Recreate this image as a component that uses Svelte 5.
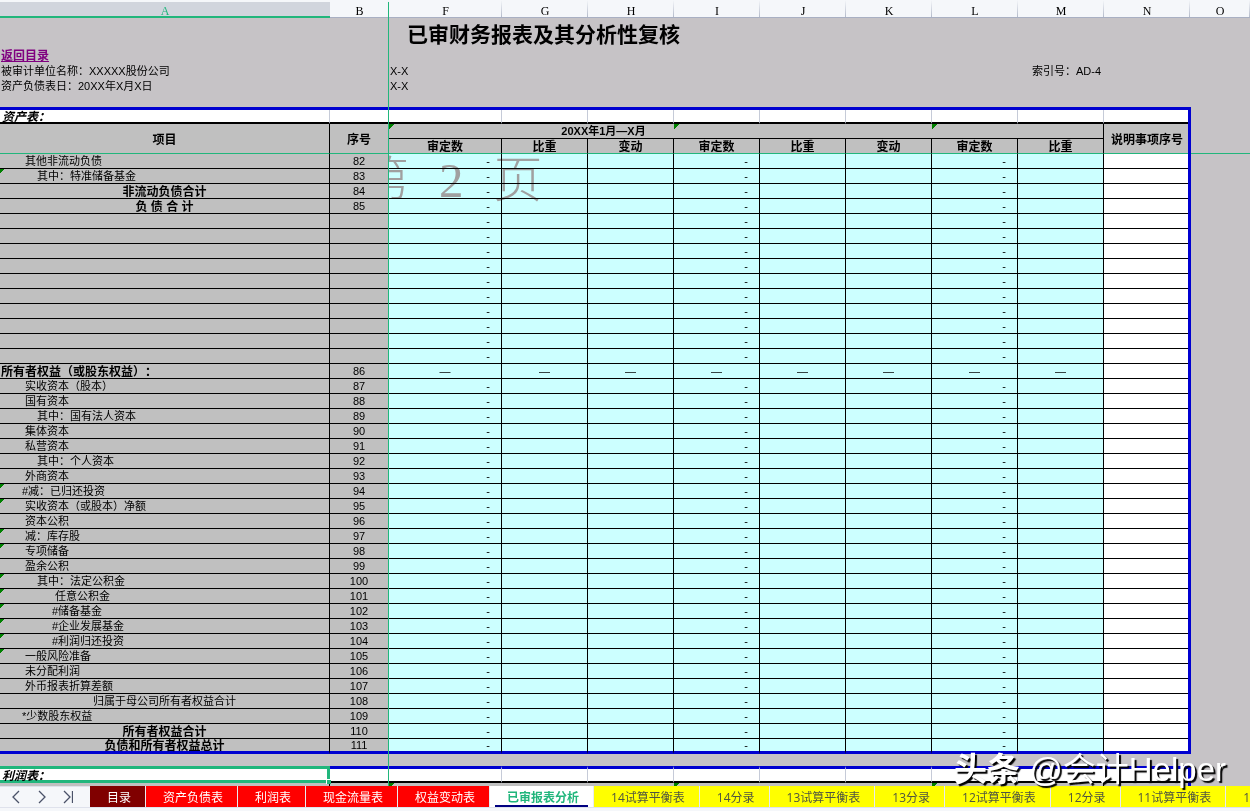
<script>
  const letters = ['A', 'B', 'F', 'G', 'H', 'I', 'J', 'K', 'L', 'M', 'N', 'O'];
  const valueCols = ['F', 'G', 'H', 'I', 'J', 'K', 'L', 'M'];
  const amountCols = ['F', 'I', 'L'];
  const subHeads = ['审定数', '比重', '变动', '审定数', '比重', '变动', '审定数', '比重'];

  const blank = { name: '', no: '' };

  let rows = [
    { name: '其他非流动负债', no: 82, indent: 25 },
    { name: '其中：特准储备基金', no: 83, indent: 37, flag: true },
    { name: '非流动负债合计', no: 84, total: true },
    { name: '负 债 合 计', no: 85, total: true },
    ...Array(10).fill(blank),
    { name: '所有者权益（或股东权益）：', no: 86, indent: 1, bold: true, section: true },
    { name: '实收资本（股本）', no: 87, indent: 25 },
    { name: '国有资本', no: 88, indent: 25 },
    { name: '其中：国有法人资本', no: 89, indent: 37 },
    { name: '集体资本', no: 90, indent: 25 },
    { name: '私营资本', no: 91, indent: 25 },
    { name: '其中：个人资本', no: 92, indent: 37 },
    { name: '外商资本', no: 93, indent: 25 },
    { name: '#减：已归还投资', no: 94, indent: 22, flag: true },
    { name: '实收资本（或股本）净额', no: 95, indent: 25, flag: true },
    { name: '资本公积', no: 96, indent: 25 },
    { name: '减：库存股', no: 97, indent: 25, flag: true },
    { name: '专项储备', no: 98, indent: 25, flag: true },
    { name: '盈余公积', no: 99, indent: 25 },
    { name: '其中：法定公积金', no: 100, indent: 37, flag: true },
    { name: '任意公积金', no: 101, indent: 55, flag: true },
    { name: '#储备基金', no: 102, indent: 52, flag: true },
    { name: '#企业发展基金', no: 103, indent: 52, flag: true },
    { name: '#利润归还投资', no: 104, indent: 52, flag: true },
    { name: '一般风险准备', no: 105, indent: 25, flag: true },
    { name: '未分配利润', no: 106, indent: 25 },
    { name: '外币报表折算差额', no: 107, indent: 25 },
    { name: '归属于母公司所有者权益合计', no: 108, center: true },
    { name: '*少数股东权益', no: 109, indent: 22 },
    { name: '所有者权益合计', no: 110, total: true },
    { name: '负债和所有者权益总计', no: 111, total: true }
  ];

  const tabs = [
    { name: '目录', color: 'maroon' },
    { name: '资产负债表', color: 'red' },
    { name: '利润表', color: 'red' },
    { name: '现金流量表', color: 'red' },
    { name: '权益变动表', color: 'red' },
    { name: '已审报表分析', color: 'navy' },
    { name: '14试算平衡表', color: 'yellow' },
    { name: '14分录', color: 'yellow' },
    { name: '13试算平衡表', color: 'yellow' },
    { name: '13分录', color: 'yellow' },
    { name: '12试算平衡表', color: 'yellow' },
    { name: '12分录', color: 'yellow' },
    { name: '11试算平衡表', color: 'yellow' },
    { name: '11分录', color: 'yellow' }
  ];

  let active = '已审报表分析';

  function cellText(row, col) {
    if (row.section) return '—';
    return amountCols.includes(col) ? '-' : '';
  }
</script>

<div class="app">
  <main class="sheet">
    <table>
      <colgroup>
        <col class="col-a" />
        <col class="col-b" />
        <col class="col-f" />
        {#each Array(8) as _}
          <col class="col-value" />
        {/each}
        <col />
      </colgroup>
      <thead>
        <tr class="letters">
          {#each letters as letter}
            <th scope="col" class:selected={letter === 'A'} class:freeze={letter === 'B'}>{letter}</th>
          {/each}
        </tr>
      </thead>
      <tbody>
        <tr class="title-row">
          <td colspan="2"></td>
          <td colspan="10" class="title">已审财务报表及其分析性复核</td>
        </tr>
        <tr class="info">
          <td colspan="12"><a href="#index">返回目录</a></td>
        </tr>
        <tr class="info">
          <td colspan="2">被审计单位名称：XXXXX股份公司</td>
          <td colspan="7">X-X</td>
          <td colspan="3" class="index-no">索引号：AD-4</td>
        </tr>
        <tr class="info">
          <td colspan="2">资产负债表日：20XX年X月X日</td>
          <td colspan="10">X-X</td>
        </tr>
        <tr class="spacer">
          <td colspan="11" class="blue-line"></td>
          <td></td>
        </tr>
        <tr class="caption">
          <td>资产表：</td>
          {#each letters.slice(1, 11) as letter}
            <td class:edge={letter === 'N'}></td>
          {/each}
          <td class="outside"></td>
        </tr>
        <tr class="head">
          <th rowspan="2" class="frozen-bottom">项目</th>
          <th rowspan="2" class="frozen-bottom">序号</th>
          <th colspan="3" class="group first flag">20XX年1月—X月</th>
          <th colspan="3" class="group flag"></th>
          <th colspan="2" class="group last flag"></th>
          <th rowspan="2" class="frozen-bottom edge">说明事项序号</th>
          <td rowspan="2" class="frozen-bottom outside"></td>
        </tr>
        <tr class="head">
          {#each subHeads as head}
            <th class="frozen-bottom">{head}</th>
          {/each}
        </tr>

        {#each rows as row}
          <tr class="data">
            <td
              class="name"
              class:small-flag={row.flag}
              class:bold={row.total || row.bold}
              class:center={row.total || row.center}
              style="padding-left: {row.indent || 0}px">{row.name}</td>
            <td class="no">{row.no}</td>
            {#each valueCols as col}
              <td class="value" class:center={row.section}>{cellText(row, col)}</td>
            {/each}
            <td class="note edge"></td>
            <td class="outside"></td>
          </tr>
        {/each}

        <tr class="gap">
          <td colspan="12"></td>
        </tr>
        <tr class="caption second">
          <td class="active-cell">利润表：</td>
          {#each letters.slice(1, 11) as letter}
            <td class:edge={letter === 'N'}></td>
          {/each}
          <td class="outside"></td>
        </tr>
        <tr class="head">
          <th></th>
          <th></th>
          <th colspan="3" class="group flag"></th>
          <th colspan="3" class="group flag"></th>
          <th colspan="2" class="group last flag"></th>
          <th class="edge"></th>
          <td class="outside"></td>
        </tr>
      </tbody>
    </table>
    <div class="page-mark"><span>第</span><span>2</span><span>页</span></div>
  </main>

  <footer>
    <div class="arrows">
      <button aria-label="上一个">
        <svg width="8" height="14" viewBox="0 0 8 14"><path d="M7 1 L1 7 L7 13" /></svg>
      </button>
      <button aria-label="下一个">
        <svg width="8" height="14" viewBox="0 0 8 14"><path d="M1 1 L7 7 L1 13" /></svg>
      </button>
      <button aria-label="最后一个">
        <svg width="10" height="14" viewBox="0 0 10 14"><path d="M1 1 L7 7 L1 13 M9.5 1 V13" /></svg>
      </button>
    </div>
    <nav>
      {#each tabs as tab}
        <button class="tab {tab.color}" class:active={tab.name === active} on:click={() => (active = tab.name)}>
          {tab.name}
        </button>
      {/each}
    </nav>
  </footer>

  <div class="brand"><b>头条</b> @会计Helper</div>
</div>

<style>
  :global(body) {
    margin: 0;
    overflow: hidden;
  }

  .app {
    position: relative;
    display: flex;
    flex-direction: column;
    height: 100vh;
    font-family: "Liberation Sans", "Noto Sans CJK SC", sans-serif;
    font-size: 11px;
    text-spacing-trim: space-all;
    color: #000;
    background: #c6c3c6;
  }

  .sheet {
    position: relative;
    flex: 1;
    min-height: 0;
    overflow: hidden;
  }

  table {
    width: 100%;
    min-width: 1200px;
    table-layout: fixed;
    border-collapse: separate;
    border-spacing: 0;
  }

  .col-a { width: 330px; }
  .col-b { width: 59px; }
  .col-f { width: 113px; }
  .col-value { width: 86px; }

  th,
  td {
    box-sizing: border-box;
    padding: 0;
    height: 15px;
    line-height: 14px;
    white-space: nowrap;
  }

  /* column letters */
  .letters th {
    height: 18px;
    padding-top: 6px;
    line-height: 11px;
    font-family: "Liberation Serif", serif;
    font-size: 12px;
    font-weight: normal;
    border-bottom: 1px solid #a9b0c3;
    background: linear-gradient(#f5f7fa, #b4bbca) right / 1px 100% no-repeat #f5f7fa;
  }

  .letters .selected {
    color: #21b67c;
    background: #d1d5dd;
    border-top: 2px solid #f5f7fa;
    border-bottom: 2px solid #21b67c;
    padding-top: 4px;
    line-height: 10px;
  }

  .letters .freeze {
    position: relative;
  }

  .freeze::after {
    content: '';
    position: absolute;
    z-index: 2;
    top: 2px;
    right: 0;
    width: 1px;
    height: 100vh;
    background: #21b67c;
  }

  /* sheet header */
  .title-row td {
    height: 31px;
  }

  .title-row .title {
    padding-top: 3px;
    padding-left: 18px;
    font-size: 21px;
    line-height: 28px;
    font-weight: bold;
  }

  .info td {
    padding-left: 1px;
    line-height: 15px;
  }

  .info .index-no {
    padding-left: 14px;
  }

  .info a {
    color: #800080;
    font-size: 12px;
    font-weight: bold;
  }

  .spacer td {
    height: 16px;
  }

  .spacer .blue-line {
    border-bottom: 3px solid #0000d0;
  }

  .caption td {
    height: 14px;
    padding-top: 3px;
    line-height: 9px;
    font-size: 12px;
    font-weight: bold;
    font-style: italic;
    background: #fff;
    border-right: 1px solid #c6cbd8;
    border-bottom: 2px solid #000;
  }

  .caption td:first-child {
    padding-left: 2px;
  }

  .caption.second td {
    height: 17px;
    border-top: 3px solid #0000d0;
  }

  .caption.second .active-cell {
    position: relative;
    line-height: 8px;
    border-top: 3px solid #21b67c;
    border-right: 3px solid #21b67c;
    border-bottom: 3px solid #21b67c;
  }

  .active-cell::after {
    content: '';
    position: absolute;
    right: -4px;
    bottom: -4px;
    width: 4px;
    height: 4px;
    background: #21b67c;
    border-top: 1px solid #fff;
    border-left: 1px solid #fff;
  }

  .head th {
    padding-top: 2px;
    line-height: 12px;
    font-size: 12px;
    background-color: #c0c0c0;
    border-right: 1px solid #000;
    border-bottom: 1px solid #000;
  }

  .head .group {
    padding-top: 0;
    line-height: 14px;
    font-size: 11px;
    border-right: 0;
  }

  .head .first {
    padding-left: 144px;
  }

  .head .last {
    border-right: 1px solid #000;
  }

  .head .frozen-bottom {
    border-bottom: 1px solid #21b67c;
  }

  .flag {
    background-image: linear-gradient(135deg, #008000 4px, transparent 4px);
  }

  .small-flag {
    background-image: linear-gradient(135deg, #008000 3px, transparent 3px);
  }

  /* data rows */
  .data td {
    border-right: 1px solid #000;
    border-bottom: 1px solid #000;
  }

  .data .name,
  .data .no {
    background-color: #c0c0c0;
  }

  .data .no {
    text-align: center;
  }

  .data .value {
    padding-right: 11px;
    text-align: right;
    background: #cff;
  }

  .data .center {
    padding-right: 0;
    text-align: center;
  }

  .data .note {
    background: #fff;
  }

  .data .bold {
    padding-top: 2px;
    line-height: 12px;
    font-size: 12px;
    font-weight: bold;
  }

  .data:nth-last-child(4) td {
    line-height: 12px;
    border-bottom: 3px solid #0000d0;
  }

  .data:nth-last-child(4) .bold {
    line-height: 10px;
  }

  /* blue frame runs one pixel into column O */
  .edge,
  .head .edge,
  .data .edge,
  .caption .edge {
    position: relative;
    border-right: 0;
  }

  .edge::after {
    content: '';
    position: absolute;
    top: -3px;
    right: -1px;
    bottom: -3px;
    width: 3px;
    background: #0000d0;
  }

  .caption .outside,
  .caption.second .outside,
  .data .outside,
  .data:nth-last-child(4) .outside {
    border: 0;
    background: none;
  }

  .gap td {
    height: 12px;
  }

  .page-mark {
    position: absolute;
    top: 153px;
    left: 389px;
    display: flex;
    align-items: center;
    gap: 30px;
    overflow: hidden;
    font-family: "Liberation Serif", "Noto Sans CJK SC", serif;
    font-size: 49px;
    font-weight: 300;
    line-height: 56px;
    color: #a0a0a0;
    mix-blend-mode: darken;
    pointer-events: none;
  }

  .page-mark span:first-child {
    margin-left: -29px;
  }

  /* sheet tabs */
  footer {
    display: flex;
    height: 25px;
    overflow: hidden;
    background: #f5f7fa;
  }

  .arrows {
    flex: none;
    display: flex;
    align-items: center;
    box-sizing: border-box;
    width: 90px;
    padding-left: 3px;
    height: 22px;
    border-top: 1px solid #dfe2ec;
    border-bottom: 1px solid #dfe2ec;
  }

  .arrows button {
    display: flex;
    justify-content: center;
    width: 26px;
    padding: 0;
    border: 0;
    background: none;
  }

  .arrows path {
    fill: none;
    stroke: #4a5268;
    stroke-width: 1.3;
  }

  nav {
    display: flex;
    flex: 1;
    min-width: 0;
    height: 21px;
    border-bottom: 1px solid #dfe2ec;
    overflow: hidden;
  }

  .tab {
    flex: none;
    box-sizing: border-box;
    height: 21px;
    padding: 2px 14px 0 17px;
    border: 0;
    border-right: 1px solid #e8eaf0;
    font-family: "Open Sans", "Noto Sans CJK SC", sans-serif;
    font-size: 12px;
    line-height: 19px;
    color: #fff;
    cursor: pointer;
  }

  .maroon { background: #800000; }
  .red { background: #f00; }
  .navy { background: #000080; }

  .yellow {
    color: #4f5540;
    background: #ff0;
  }

  .tab.active {
    color: #21b67c;
    font-weight: bold;
    background: linear-gradient(#000080, #000080) center bottom / 93px 2px no-repeat #fff;
  }

  .brand {
    position: absolute;
    z-index: 3;
    right: 24px;
    bottom: 21px;
    font-family: "Liberation Sans", "Noto Sans CJK SC", sans-serif;
    font-size: 33px;
    line-height: 40px;
    white-space: nowrap;
    color: #fff;
    text-shadow: 2px 2px 1px #000;
    pointer-events: none;
  }
</style>
